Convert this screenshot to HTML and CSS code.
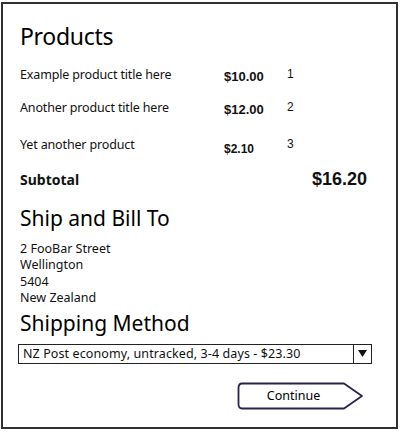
FILE: index.html
```html
<!DOCTYPE html>
<html>
<head>
<meta charset="utf-8">
<link rel="stylesheet" href="styles.css">
</head>
<body>
<div class="frame">
  <h1 class="heading h-products">Products</h1>
  <div class="products">
    <div class="row r1">
      <span class="title">Example product title here</span>
      <span class="price">$10.00</span>
      <span class="qty">1</span>
    </div>
    <div class="row r2">
      <span class="title">Another product title here</span>
      <span class="price">$12.00</span>
      <span class="qty">2</span>
    </div>
    <div class="row r3">
      <span class="title">Yet another product</span>
      <span class="price small">$2.10</span>
      <span class="qty">3</span>
    </div>
    <div class="row subtotal">
      <span class="sub-label">Subtotal</span>
      <span class="sub-value">$16.20</span>
    </div>
  </div>
  <h2 class="heading h-ship">Ship and Bill To</h2>
  <div class="address">
    <div>2 FooBar Street</div>
    <div>Wellington</div>
    <div>5404</div>
    <div>New Zealand</div>
  </div>
  <h2 class="heading h-method">Shipping Method</h2>
  <div class="select">
    <span class="select-text">NZ Post economy, untracked, 3-4 days - $23.30</span>
    <span class="select-arrow"><svg width="9" height="7" viewBox="0 0 9 7"><path d="M0 0 H9 L4.5 7 Z" fill="#111"/></svg></span>
  </div>
  <div class="actions">
    <button class="continue">
      <svg class="btn-shape" width="127" height="28" viewBox="0 0 127 28">
        <path d="M5 1.5 H107 L125 14 L107 26.5 H5 Q1.5 26.5 1.5 22 V6 Q1.5 1.5 5 1.5 Z" fill="#fff" stroke="#2b2150" stroke-width="1.8" stroke-linejoin="round"/>
      </svg>
      <span class="btn-label">Continue</span>
    </button>
  </div>
</div>
</body>
</html>
```
FILE: styles.css
```css
* { box-sizing: border-box; }
html, body { margin: 0; padding: 0; background: #fff; }
body {
  width: 401px;
  height: 433px;
  font-family: "Noto Sans", "Open Sans", sans-serif;
  color: #111;
}
.frame {
  margin: 2px 0 0 1px;
  width: 397px;
  height: 427px;
  border: 2px solid #303030;
  padding: 0 0 0 17px;
  display: flex;
  flex-direction: column;
}
.heading {
  margin: 0;
  font-weight: 400;
  color: #000;
  line-height: 1;
}
.h-products {
  font-size: 23px;
  margin-top: 21px;
  height: 27px;
  letter-spacing: -0.3px;
}
.products {
  display: flex;
  flex-direction: column;
}
.row {
  display: grid;
  grid-template-columns: 204px 63px 1fr;
  align-items: center;
  font-size: 12.5px;
}
.r1 { margin-top: 14px; height: 16px; }
.r2 { margin-top: 17px; height: 16px; }
.r3 { margin-top: 21px; height: 16px; }
.title { letter-spacing: -0.15px; }
.price {
  font-family: "Liberation Sans", Arial, sans-serif;
  font-weight: 700;
  font-size: 13px;
  position: relative;
  top: 2px;
}
.price.small { font-size: 12px; top: 4px; }
.qty {
  font-family: "Liberation Sans", Arial, sans-serif;
  font-size: 12px;
  position: relative;
  top: -1px;
}
.subtotal {
  margin-top: 17px;
  height: 20px;
  display: flex;
  justify-content: space-between;
  padding-right: 29px;
}
.sub-label {
  font-weight: 700;
  font-size: 14px;
}
.sub-value {
  font-family: "Liberation Sans", Arial, sans-serif;
  font-weight: 700;
  font-size: 18px;
}
.h-ship {
  font-size: 21px;
  margin-top: 19px;
  height: 25px;
}
.address {
  margin-top: 8px;
  font-size: 12.5px;
  line-height: 16.4px;
}
.h-method {
  font-size: 21px;
  margin-top: 6px;
  height: 26px;
}
.select {
  margin-top: 5px;
  margin-left: -2px;
  width: 354px;
  height: 20px;
  border: 1px solid #222;
  display: flex;
  align-items: center;
  font-size: 12.5px;
}
.select-text {
  flex: 1;
  padding-left: 4px;
  letter-spacing: 0.1px;
  white-space: nowrap;
}
.select-arrow {
  width: 18px;
  height: 100%;
  border-left: 1px solid #222;
  display: flex;
  align-items: center;
  justify-content: center;
}
.actions {
  margin-top: 18px;
  display: flex;
  padding-left: 217px;
}
.continue {
  position: relative;
  width: 127px;
  height: 28px;
  border: 0;
  padding: 0;
  background: none;
  font-family: "Noto Sans", "Open Sans", sans-serif;
  font-size: 12.5px;
  color: #000;
  display: flex;
  align-items: center;
  justify-content: center;
}
.btn-shape { position: absolute; left: 0; top: 0; }
.btn-label { position: relative; padding-right: 14px; }
```
